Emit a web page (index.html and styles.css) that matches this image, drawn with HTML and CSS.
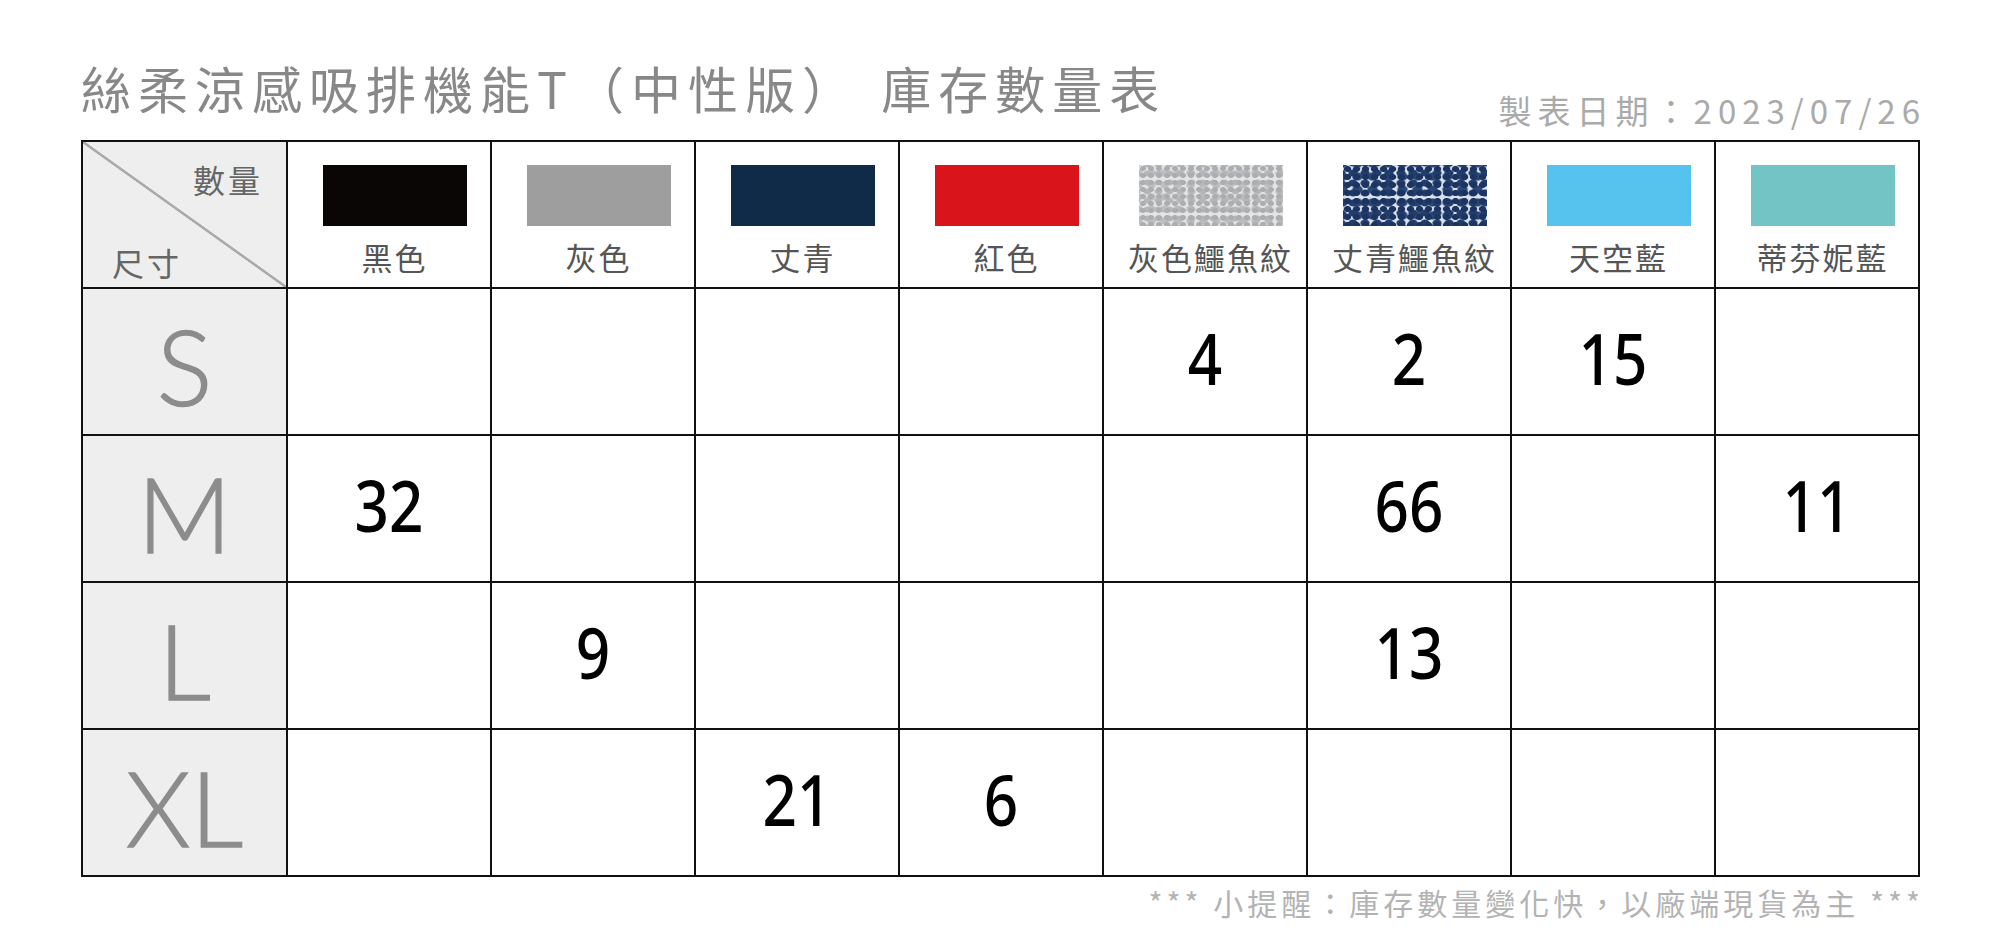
FILE: index.html
```html
<!DOCTYPE html>
<html lang="zh-Hant">
<head>
<meta charset="utf-8">
<title>絲柔涼感吸排機能T（中性版） 庫存數量表</title>
<link rel="stylesheet" href="styles.css">
</head>
<body>
<div class="page">
  <header class="top">
    <h1 class="title">絲柔涼感吸排機能T（中性版） 庫存數量表</h1>
    <div class="date">製表日期：2023/07/26</div>
  </header>

  <div class="grid">
    <div class="corner"><span class="c-qty">數量</span><span class="c-size">尺寸</span></div>
    <div class="hcell"><span class="sw sw-black"></span><span class="lbl">黑色</span></div>
    <div class="hcell"><span class="sw sw-gray"></span><span class="lbl">灰色</span></div>
    <div class="hcell"><span class="sw sw-navy"></span><span class="lbl">丈青</span></div>
    <div class="hcell"><span class="sw sw-red"></span><span class="lbl">紅色</span></div>
    <div class="hcell"><span class="sw sw-gcroc"></span><span class="lbl">灰色鱷魚紋</span></div>
    <div class="hcell"><span class="sw sw-ncroc"></span><span class="lbl">丈青鱷魚紋</span></div>
    <div class="hcell"><span class="sw sw-sky"></span><span class="lbl">天空藍</span></div>
    <div class="hcell"><span class="sw sw-tiff"></span><span class="lbl">蒂芬妮藍</span></div>

    <div class="size">S</div>
    <div class="cell"></div>
    <div class="cell"></div>
    <div class="cell"></div>
    <div class="cell"></div>
    <div class="cell"><span class="num">4</span></div>
    <div class="cell"><span class="num">2</span></div>
    <div class="cell"><span class="num">15</span></div>
    <div class="cell"></div>

    <div class="size">M</div>
    <div class="cell"><span class="num">32</span></div>
    <div class="cell"></div>
    <div class="cell"></div>
    <div class="cell"></div>
    <div class="cell"></div>
    <div class="cell"><span class="num">66</span></div>
    <div class="cell"></div>
    <div class="cell"><span class="num">11</span></div>

    <div class="size">L</div>
    <div class="cell"></div>
    <div class="cell"><span class="num">9</span></div>
    <div class="cell"></div>
    <div class="cell"></div>
    <div class="cell"></div>
    <div class="cell"><span class="num">13</span></div>
    <div class="cell"></div>
    <div class="cell"></div>

    <div class="size">XL</div>
    <div class="cell"></div>
    <div class="cell"></div>
    <div class="cell"><span class="num">21</span></div>
    <div class="cell"><span class="num">6</span></div>
    <div class="cell"></div>
    <div class="cell"></div>
    <div class="cell"></div>
    <div class="cell"></div>
  </div>

  <p class="note">*** 小提醒：庫存數量變化快，以廠端現貨為主 ***</p>
</div>
</body>
</html>
```

FILE: styles.css
```css
* { box-sizing: border-box; }

html, body {
  margin: 0;
  padding: 0;
  background: #ffffff;
}

body {
  font-family: "Noto Sans CJK TC", "Noto Sans", sans-serif;
  width: 2000px;
  height: 948px;
  overflow: hidden;
}

.page {
  padding: 57px 80px 0 81px;
}

/* ---------- header ---------- */
.top {
  display: flex;
  justify-content: space-between;
  align-items: flex-end;
  margin-bottom: 10px;
}

.title {
  margin: 0 0 13px 0;
  font-size: 50px;
  line-height: 60px;
  font-weight: 400;
  letter-spacing: 7px;
  word-spacing: 4px;
  color: #888888;
  white-space: nowrap;
}

.date {
  font-size: 33px;
  line-height: 40px;
  letter-spacing: 6px;
  color: #aaaaaa;
  margin-right: -6px;
  white-space: nowrap;
}

/* ---------- table ---------- */
.grid {
  display: grid;
  grid-template-columns: 205px repeat(8, 204px);
  grid-auto-rows: 147px;
  width: max-content;
  border-top: 2px solid #111;
  border-left: 2px solid #111;
}

.grid > div {
  border-right: 2px solid #111;
  border-bottom: 2px solid #111;
}

.corner {
  background-color: #eeeeee;
  background-image: linear-gradient(to top right,
      transparent calc(50% - 1.6px),
      #ababab calc(50% - 1px),
      #ababab calc(50% + 1px),
      transparent calc(50% + 1.6px));
  display: flex;
  flex-direction: column;
  justify-content: space-between;
  padding: 19px 23px 7px 29px;
  font-size: 32px;
  line-height: 36px;
  letter-spacing: 3px;
  color: #666666;
}

.c-qty { align-self: flex-end; }
.c-size { align-self: flex-start; }

.hcell {
  display: flex;
  flex-direction: column;
  align-items: center;
  padding: 23px 0 0 11px;
  gap: 13px;
}

.sw {
  display: block;
  width: 144px;
  height: 61px;
}

.sw-black { background: #0a0605; }
.sw-gray  { background: #9e9e9e; }
.sw-navy  { background: #0f2b47; }
.sw-red   { background: #d9151b; }
.sw-sky   { background: #56c2ee; }
.sw-tiff  { background: #72c5c4; }

.sw-gcroc {
  background-color: #e2e4e5;
  background-image:
    radial-gradient(ellipse 48% 44% at 50% 50%, #abadaf 66%, rgba(171,173,175,0) 92%),
    radial-gradient(ellipse 46% 42% at 50% 50%, #b4b6b8 62%, rgba(180,182,184,0) 90%),
    radial-gradient(ellipse 44% 40% at 50% 50%, #bcbec0 58%, rgba(188,190,192,0) 88%);
  background-size: 8px 7px, 11px 9px, 13px 12px;
  background-position: 0 0, 3px 4px, 6px 2px;
}

.sw-ncroc {
  background-color: #d9e0ea;
  background-image:
    radial-gradient(ellipse 50% 46% at 50% 50%, #1b3462 70%, rgba(27,52,98,0) 92%),
    radial-gradient(ellipse 48% 44% at 50% 50%, #223d6c 66%, rgba(34,61,108,0) 90%),
    radial-gradient(ellipse 46% 42% at 50% 50%, #2a4775 60%, rgba(42,71,117,0) 88%);
  background-size: 9px 8px, 12px 10px, 15px 13px;
  background-position: 0 0, 4px 3px, 7px 5px;
}

.lbl {
  font-size: 31px;
  line-height: 36px;
  letter-spacing: 2px;
  color: #555555;
  white-space: nowrap;
}

.size {
  background: #eeeeee;
  display: flex;
  align-items: center;
  justify-content: center;
  padding-top: 8px;
  font-family: "Lato", "Noto Sans", sans-serif;
  font-weight: 300;
  font-size: 104px;
  line-height: 1;
  color: #8c8c8c;
  -webkit-text-stroke: 1.4px #8c8c8c;
}

.cell {
  display: flex;
  align-items: center;
  justify-content: center;
  padding-bottom: 8px;
}

.num {
  display: inline-block;
  font-family: "Noto Sans", sans-serif;
  font-size: 70px;
  line-height: 1;
  font-weight: 500;
  color: #000000;
  transform: scaleX(0.86);
}

/* ---------- footnote ---------- */
.note {
  margin: 5px -4px 0 0;
  text-align: right;
  font-size: 30px;
  line-height: 40px;
  letter-spacing: 4px;
  color: #b3b3b3;
  white-space: nowrap;
}
```
